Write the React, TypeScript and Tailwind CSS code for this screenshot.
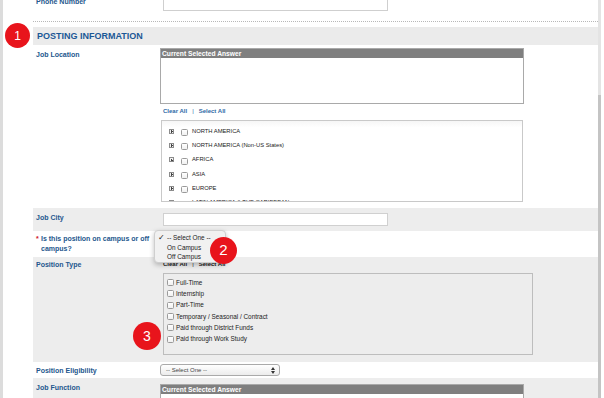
import React from "react"

const font = { fontFamily: '"Liberation Sans", Arial, sans-serif' }

const regions = [
  "NORTH AMERICA",
  "NORTH AMERICA (Non-US States)",
  "AFRICA",
  "ASIA",
  "EUROPE",
  "LATIN AMERICA & THE CARIBBEAN",
]

const positionTypes = [
  "Full-Time",
  "Internship",
  "Part-Time",
  "Temporary / Seasonal / Contract",
  "Paid through District Funds",
  "Paid through Work Study",
]

function Label({ children, pt }: { children: React.ReactNode; pt: string }) {
  return (
    <div className={`w-[127px] shrink-0 pl-[3px] pr-[6px] ${pt} text-[7px] leading-[9px] font-bold text-[#24578d]`}>
      {children}
    </div>
  )
}

function Checkbox() {
  return <span className="inline-block w-[7px] h-[7px] shrink-0 rounded-[1.5px] border border-[#9a9a9a] bg-gradient-to-b from-white to-[#f0f0f0]" />
}

function AnswerBox({ h }: { h: string }) {
  return (
    <div className={`w-[364px] ${h} border border-[#a9a9a9] bg-white`}>
      <div className="h-[9px] bg-[#7f7f7f] px-[1px] text-[6.7px] leading-[9px] font-bold text-white">Current Selected Answer</div>
    </div>
  )
}

function Badge({ n, className }: { n: string; className: string }) {
  return (
    <div className={`absolute flex items-center justify-center rounded-full bg-[#e8141c] text-white ${className}`}>
      {n}
    </div>
  )
}

export default function App() {
  return (
    <div className="relative w-[604px] h-[398px] overflow-hidden bg-white" style={font}>
      {/* window edges */}
      <div className="absolute left-0 top-0 w-[3px] h-full bg-[#dcdcdc]" />
      <div className="absolute right-[3px] top-0 w-[3px] h-[95px] bg-[#e4e4e4]" />
      <div className="absolute right-[3px] top-[95px] w-[3px] h-[303px] bg-[#c4c4c4]" />

      <div className="ml-[33px] w-[565px]">
        {/* Phone row (cut off) */}
        <div className="-mt-[6px] flex h-[17px]">
          <Label pt="pt-[3px]">Phone Number</Label>
          <div className="ml-[3px] w-[225px] h-full border border-[#cfcfcf] bg-white" />
        </div>

        <div className="mt-[10px] w-[567px] border-t border-dotted border-[#b8b8b8]" />

        {/* Section header */}
        <div className="mt-[5px] h-[18px] bg-[#ebebeb] pl-[4px] text-[9px] leading-[18px] font-bold text-[#1b5896]">
          POSTING INFORMATION
        </div>

        {/* Job Location */}
        <div className="flex bg-white pb-[6px]">
          <Label pt="pt-[4.5px]">Job Location</Label>
          <div className="pt-[3px]">
            <AnswerBox h="h-[56px]" />
            <div className="mt-[3px] ml-[3px] flex gap-[5px] text-[6px] leading-[8px] font-bold text-[#2f6aa6]">
              <span>Clear All</span>
              <span className="font-normal">|</span>
              <span>Select All</span>
            </div>
            <div className="mt-[5px] ml-[1px] w-[362px] h-[82px] overflow-hidden border border-[#c9c9c9] bg-gradient-to-b from-[#f6f6f6] to-white to-[8%] pt-[3px]">
              {regions.map((r) => (
                <div key={r} className="flex items-center h-[14.3px] pl-[7px]">
                  <span className="relative inline-block w-[5px] h-[5px] border border-[#8c8c8c] bg-[#f2f2f2]">
                    <span className="absolute left-[0.5px] top-[1.5px] w-[2px] h-[0.8px] bg-[#444]" />
                    <span className="absolute left-[1px] top-[0.5px] w-[0.8px] h-[2.5px] bg-[#444]" />
                  </span>
                  <span className="ml-[7px]"><Checkbox /></span>
                  <span className="ml-[4px] text-[5.8px] text-[#222]">{r}</span>
                </div>
              ))}
            </div>
          </div>
        </div>

        {/* Job City */}
        <div className="flex h-[23px] bg-[#ededed]">
          <Label pt="pt-[4.5px]">Job City</Label>
          <div className="mt-[5px] ml-[3px] w-[225px] h-[13px] border border-[#d0d0d0] bg-white" />
        </div>

        {/* Campus */}
        <div className="flex h-[26px] bg-white">
          <div className="w-[127px] shrink-0 pl-[3px] pr-[6px] pt-[2.5px] text-[7px] leading-[10px] font-bold text-[#24578d] flex">
            <span className="text-[#d0202a] w-[5px] shrink-0">*</span>
            <span>Is this position on campus or off campus?</span>
          </div>
        </div>

        {/* Position Type */}
        <div className="flex h-[105px] bg-[#ededed]">
          <Label pt="pt-[3px]">Position Type</Label>
          <div className="pt-[3px]">
            <div className="ml-[3px] flex gap-[5px] text-[6px] leading-[8px] font-bold text-[#222]">
              <span>Clear All</span>
              <span className="font-normal">|</span>
              <span>Select All</span>
            </div>
            <div className="mt-[5px] ml-[3px] w-[370px] h-[82px] border border-[#bdbdbd] pt-[3px]">
              {positionTypes.map((p) => (
                <div key={p} className="flex items-center h-[11.3px] pl-[3px]">
                  <Checkbox />
                  <span className="ml-[2px] text-[6.4px] text-[#222]">{p}</span>
                </div>
              ))}
            </div>
          </div>
        </div>

        {/* Position Eligibility */}
        <div className="flex h-[16px] bg-white">
          <Label pt="pt-[3.5px]">Position Eligibility</Label>
          <div className="mt-[2px] relative w-[120px] h-[12px] rounded-[3px] border border-[#aaaaaa] bg-gradient-to-b from-white to-[#ececec] pl-[5px] text-[6px] leading-[10px] text-[#444]">
            -- Select One --
            <svg className="absolute right-[4px] top-[2px]" width="4" height="7" viewBox="0 0 4 7">
              <path d="M0 3 L2 0 L4 3 Z M0 4 L2 7 L4 4 Z" fill="#333" />
            </svg>
          </div>
        </div>

        {/* Job Function */}
        <div className="flex h-[30px] bg-[#ededed]">
          <Label pt="pt-[4.5px]">Job Function</Label>
          <div className="pt-[6px]">
            <AnswerBox h="h-[40px]" />
          </div>
        </div>
      </div>

      {/* native select popup */}
      <div className="absolute left-[154px] top-[230px] w-[72px] h-[33px] rounded-[4px] border border-[#cfcfcf] bg-[#f1f1f1] shadow-[0_2px_5px_rgba(0,0,0,0.25)] pt-[2px] text-[6.4px] leading-[9.5px] text-[#222]">
        <div className="flex"><span className="w-[12px] pl-[3px] text-[8px] leading-[9.5px]">✓</span>-- Select One --</div>
        <div className="pl-[12px]">On Campus</div>
        <div className="pl-[12px]">Off Campus</div>
      </div>

      <Badge n="1" className="left-[5px] top-[23px] w-[25px] h-[25px] text-[12px]" />
      <Badge n="2" className="left-[210px] top-[237px] w-[27px] h-[27px] text-[15px]" />
      <Badge n="3" className="left-[133px] top-[322px] w-[28px] h-[28px] text-[14px]" />
    </div>
  )
}
